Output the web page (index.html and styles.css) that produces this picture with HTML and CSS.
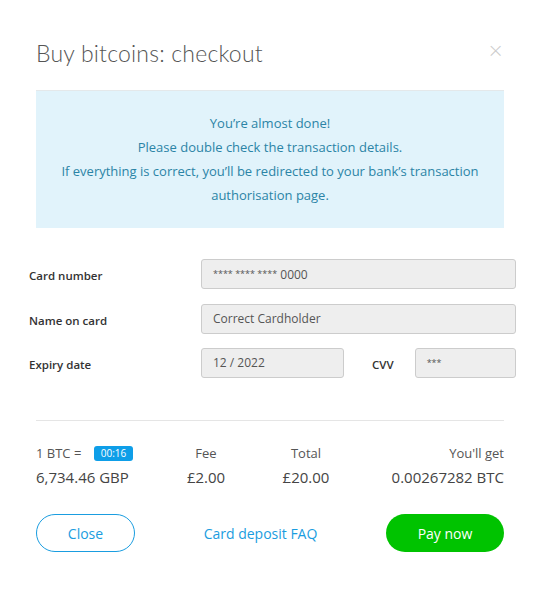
FILE: index.html
```html
<!DOCTYPE html>
<html lang="en">
<head>
    <meta charset="UTF-8">
    <meta name="viewport" content="width=device-width, initial-scale=1.0">
    <title>Buy bitcoins: checkout</title>
    <link rel="stylesheet" href="styles.css">
</head>
<body>

<div class="modal">
    <div class="modal-header">
        <h2 class="modal-title">Buy bitcoins: checkout</h2>
        <span class="close-x">&times;</span>
    </div>

    <div class="alert">
        <p>You’re almost done!</p>
        <p>Please double check the transaction details.</p>
        <p>If everything is correct, you’ll be redirected to your bank’s transaction authorisation page.</p>
    </div>

    <form class="card-form">
        <div class="form-row">
            <label>Card number</label>
            <div class="field field-wide"><span class="stars">**** **** ****</span> 0000</div>
        </div>
        <div class="form-row">
            <label>Name on card</label>
            <div class="field field-wide">Correct Cardholder</div>
        </div>
        <div class="form-row">
            <label>Expiry date</label>
            <div class="field field-expiry">12 / 2022</div>
            <label class="cvv-label">CVV</label>
            <div class="field field-cvv"><span class="stars">***</span></div>
        </div>
    </form>

    <hr class="divider">

    <div class="summary">
        <div class="col col-rate">
            <div class="col-label">1 BTC = <span class="timer">00:16</span></div>
            <div class="col-value">6,734.46 GBP</div>
        </div>
        <div class="col col-fee">
            <div class="col-label">Fee</div>
            <div class="col-value">£2.00</div>
        </div>
        <div class="col col-total">
            <div class="col-label">Total</div>
            <div class="col-value">£20.00</div>
        </div>
        <div class="col col-get">
            <div class="col-label">You'll get</div>
            <div class="col-value">0.00267282 BTC</div>
        </div>
    </div>

    <div class="actions">
        <button class="btn btn-outline">Close</button>
        <a class="faq-link" href="#">Card deposit FAQ</a>
        <button class="btn btn-green">Pay now</button>
    </div>
</div>

</body>
</html>
```

FILE: styles.css
```css
body {
    margin: 0;
    background: #fff;
    font-family: "Open Sans", Arial, sans-serif;
    color: #333;
}
.modal {
    width: 468px;
    margin-left: 36px;
}
.modal-header {
    display: flex;
    justify-content: space-between;
    align-items: center;
    height: 90px;
    padding-top: 16px;
    box-sizing: border-box;
}
.modal-title {
    margin: 0;
    font-family: "Lato", sans-serif;
    font-weight: 300;
    font-size: 23px;
    color: #555;
    letter-spacing: 0.2px;
}
.close-x {
    font-family: "DejaVu Sans", sans-serif;
    font-weight: 200;
    font-size: 20px;
    color: #ccc;
    margin-right: 0;
    margin-top: -6px;
}
.alert {
    background: #e1f3fb;
    border-top: 1px solid #e4e8ea;
    color: #2b84a6;
    text-align: center;
    font-size: 13px;
    line-height: 24px;
    padding: 20px 18px 21px;
}
.alert p {
    margin: 0;
}
.card-form {
    margin: 31px -12px 0 -7px;
}
.form-row {
    display: flex;
    align-items: center;
    margin-bottom: 14.5px;
}
.form-row label {
    width: 172px;
    font-size: 11.5px;
    font-weight: 600;
    color: #333;
    padding-top: 3px;
}
.field {
    height: 30px;
    box-sizing: border-box;
    background: #eee;
    border: 1px solid #ccc;
    border-radius: 3px;
    padding: 0 11px;
    font-size: 12px;
    line-height: 28px;
    color: #555;
}
.field-wide {
    width: 315px;
}
.field-expiry {
    width: 143px;
}
.form-row .cvv-label {
    width: auto;
    margin-left: 28px;
    margin-right: 21px;
}
.field-cvv {
    width: 101px;
}
.stars {
    font-size: 9px;
    vertical-align: 2px;
}
.divider {
    border: 0;
    border-top: 1px solid #e5e5e5;
    margin: 42px 0 0;
}
.summary {
    display: flex;
    margin-top: 22px;
    font-size: 13px;
    color: #555;
}
.col-label {
    height: 20px;
    line-height: 20px;
}
.col-value {
    font-size: 15px;
    color: #444;
    margin-top: 4px;
}
.col-rate {
    width: 150px;
}
.col-fee {
    width: 40px;
    text-align: center;
}
.col-total {
    width: 160px;
    text-align: center;
}
.col-get {
    flex: 1;
    text-align: right;
}
.timer {
    display: inline-block;
    background: #0e9ee8;
    color: #fff;
    font-size: 10px;
    line-height: 15px;
    padding: 0 7px;
    border-radius: 3px;
    margin-left: 9px;
    vertical-align: 1px;
}
.actions {
    display: flex;
    justify-content: space-between;
    align-items: center;
    margin-top: 27px;
}
.btn {
    height: 38px;
    border-radius: 19px;
    font-family: "Open Sans", Arial, sans-serif;
    font-size: 14px;
    cursor: pointer;
}
.btn-outline {
    width: 99px;
    background: #fff;
    border: 1px solid #1a9de0;
    color: #1a9de0;
}
.btn-green {
    width: 118px;
    background: #00c300;
    border: none;
    color: #fff;
}
.faq-link {
    color: #1a9de0;
    font-size: 14px;
    text-decoration: none;
}
```
